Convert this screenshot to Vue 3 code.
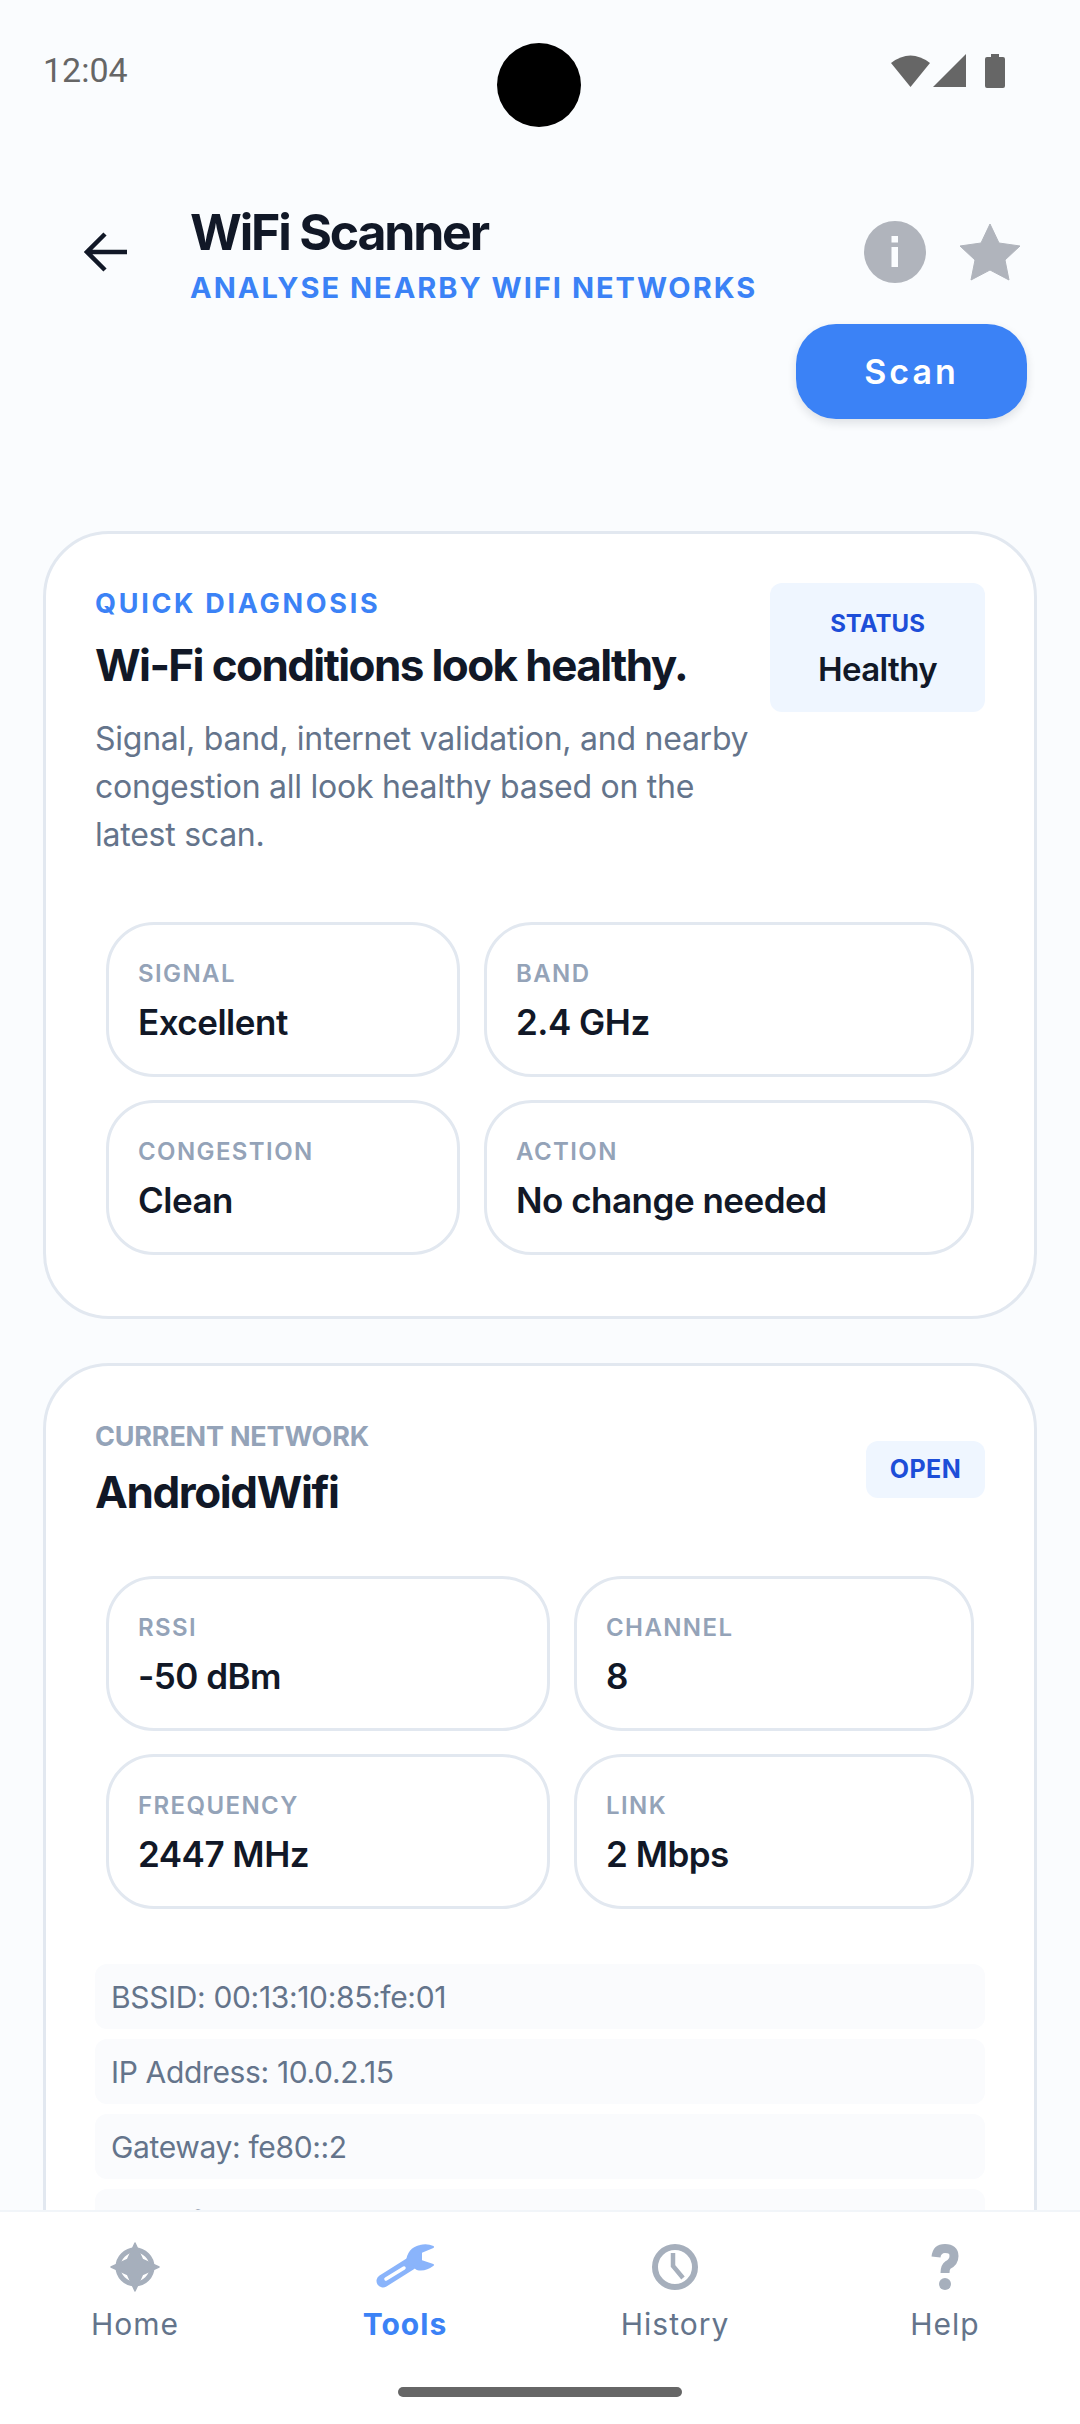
<script setup>
const tilesA = [
  { label: 'Signal', value: 'Excellent' },
  { label: 'Band', value: '2.4 GHz' },
  { label: 'Congestion', value: 'Clean' },
  { label: 'Action', value: 'No change needed' },
]
const tilesB = [
  { label: 'RSSI', value: '-50 dBm' },
  { label: 'Channel', value: '8' },
  { label: 'Frequency', value: '2447 MHz' },
  { label: 'Link', value: '2 Mbps' },
]
const details = [
  'BSSID: 00:13:10:85:fe:01',
  'IP Address: 10.0.2.15',
  'Gateway: fe80::2',
  'DNS: fec0::3 10.0.2.3',
]
</script>

<template>
  <div class="screen">
    <div class="status">
      <span class="time">12:04</span>
      <div class="status-icons">
        <svg width="39" height="33" viewBox="0 0 39 33"><path d="M0 9 Q19.5 -6 39 9 L19.5 33 Z" fill="#666" /></svg>
        <svg width="33" height="33" viewBox="0 0 33 33"><path d="M33 0 V33 H0 Z" fill="#666" /></svg>
        <svg class="batt" width="20" height="34" viewBox="0 0 20 34"><path d="M6 0 H14 V3 H18 Q20 3 20 5 V32 Q20 34 18 34 H2 Q0 34 0 32 V5 Q0 3 2 3 H6 Z" fill="#666" /></svg>
      </div>
      <div class="camera"></div>
    </div>

    <div class="scroll">
      <header class="top">
        <svg class="back" width="44" height="40" viewBox="0 0 44 40">
          <path d="M43 20 H3 M21 2 L3 20 L21 38" fill="none" stroke="#111827" stroke-width="4.5" />
        </svg>
        <div class="titles">
          <h1>WiFi Scanner</h1>
          <p>Analyse nearby WiFi networks</p>
        </div>
        <svg class="info" width="62" height="62" viewBox="0 0 62 62">
          <circle cx="31" cy="31" r="31" fill="#b0b4bc" />
          <rect x="27.5" y="15" width="6.5" height="6.5" fill="#fbfdff" />
          <rect x="27.5" y="26" width="6.5" height="20" fill="#fbfdff" />
        </svg>
        <svg class="star" width="60" height="58" viewBox="0 0 60 58">
          <path d="M30 1 L39 20 L60 23 L45 37 L49 57 L30 47 L11 57 L15 37 L0 23 L21 20 Z" fill="#b0b4bc" stroke="#b0b4bc" stroke-width="1" stroke-linejoin="round" />
        </svg>
      </header>
      <div class="scan-row">
        <button class="scan">Scan</button>
      </div>

      <section class="card first">
        <div class="diag-head">
          <div class="diag-text">
            <div class="eyebrow">Quick diagnosis</div>
            <h2>Wi-Fi conditions look healthy.</h2>
            <p>Signal, band, internet validation, and nearby congestion all look healthy based on the latest scan.</p>
          </div>
          <div class="status-box">
            <span class="status-label">Status</span>
            <span class="status-value">Healthy</span>
          </div>
        </div>
        <div class="tiles tiles-a">
          <div v-for="t in tilesA" :key="t.label" class="tile">
            <span class="tile-label">{{ t.label }}</span>
            <span class="tile-value">{{ t.value }}</span>
          </div>
        </div>
      </section>

      <section class="card">
        <div class="net-head">
          <div class="net-text">
            <div class="net-label">Current network</div>
            <h2 class="net-name">AndroidWifi</h2>
          </div>
          <span class="pill">OPEN</span>
        </div>
        <div class="tiles tiles-b">
          <div v-for="t in tilesB" :key="t.label" class="tile">
            <span class="tile-label">{{ t.label }}</span>
            <span class="tile-value">{{ t.value }}</span>
          </div>
        </div>
        <div class="details">
          <div v-for="d in details" :key="d" class="detail">{{ d }}</div>
        </div>
      </section>
    </div>

    <nav class="nav">
      <div class="nav-item">
        <svg width="50" height="50" viewBox="0 0 50 50" class="nav-icon">
          <circle cx="25" cy="25" r="17" fill="none" stroke="#a6afbc" stroke-width="5" />
          <path d="M25 1 L32.5 17.5 L49 25 L32.5 32.5 L25 49 L17.5 32.5 L1 25 L17.5 17.5 Z" fill="#a6afbc" stroke="#a6afbc" stroke-width="1.5" stroke-linejoin="round" />
        </svg>
        <span>Home</span>
      </div>
      <div class="nav-item active">
        <svg width="60" height="46" viewBox="0 0 60 46" class="nav-icon">
          <path d="M8 37 L35 20" fill="none" stroke="#8ab4fb" stroke-width="13" stroke-linecap="round" />
          <path d="M32 18 Q33 5 45 2 Q52 0 58 3 L46 8 L46 17 L58 21 Q50 27 42 25 Z" fill="#8ab4fb" stroke="#8ab4fb" stroke-width="2" stroke-linejoin="round" />
          <path d="M11 35 L29 24" fill="none" stroke="#fff" stroke-width="3.5" stroke-linecap="round" />
        </svg>
        <span>Tools</span>
      </div>
      <div class="nav-item">
        <svg width="50" height="50" viewBox="0 0 50 50" class="nav-icon">
          <circle cx="25" cy="25" r="20" fill="none" stroke="#a6afbc" stroke-width="6" />
          <path d="M23 11 V24 L33 36" fill="none" stroke="#a6afbc" stroke-width="4.5" />
        </svg>
        <span>History</span>
      </div>
      <div class="nav-item">
        <svg width="50" height="50" viewBox="0 0 50 50" class="nav-icon">
          <path d="M16 15 Q17 6.5 25 6.5 Q34 6.5 34 14 Q34 20 28 23 Q25 25 25 31" fill="none" stroke="#a6afbc" stroke-width="9" />
          <circle cx="25" cy="42" r="6" fill="#a6afbc" />
        </svg>
        <span>Help</span>
      </div>
      <div class="home-bar"></div>
    </nav>
  </div>
</template>

<style scoped>
.screen {
  position: relative;
  width: 1080px;
  height: 2424px;
  overflow: hidden;
  display: flex;
  flex-direction: column;
  background: #fafcfe;
  font-family: Inter, sans-serif;
  color: #111827;
}
.status {
  flex: none;
  height: 140px;
  padding: 0 75px 0 43px;
  display: flex;
  justify-content: space-between;
  align-items: flex-start;
  box-sizing: border-box;
}
.time {
  font-family: Roboto, sans-serif;
  font-size: 34px;
  line-height: 40px;
  margin-top: 50px;
  color: #666;
}
.status-icons {
  display: flex;
  gap: 3px;
  margin-top: 54px;
}
.batt {
  margin-left: 16px;
}
.camera {
  position: absolute;
  left: 497px;
  top: 43px;
  width: 84px;
  height: 84px;
  border-radius: 50%;
  background: #000;
}
.scroll {
  flex: 1;
  min-height: 0;
  overflow: hidden;
}
.top {
  display: flex;
  align-items: center;
  padding: 63px 60px 0 84px;
}
.back,
.info,
.star {
  flex: none;
  margin-bottom: 4px;
}
.titles {
  flex: 1;
  margin-left: 62px;
}
h1 {
  margin: 0;
  font-size: 50px;
  line-height: 58px;
  font-weight: 700;
  letter-spacing: -2.2px;
  color: #111827;
}
.titles p {
  margin: 10px 0 0;
  font-size: 29px;
  line-height: 34px;
  font-weight: 700;
  letter-spacing: 2px;
  text-transform: uppercase;
  white-space: nowrap;
  color: #3b82f6;
}
.info {
  margin-right: 34px;
}
.scan-row {
  display: flex;
  justify-content: flex-end;
  padding: 19px 53px 0 0;
}
.scan {
  width: 231px;
  height: 95px;
  border: none;
  border-radius: 40px;
  background: #3b82f6;
  color: #fff;
  font-family: inherit;
  font-size: 34px;
  font-weight: 600;
  letter-spacing: 3px;
  box-shadow: 0 4px 10px rgba(15, 23, 42, 0.12);
}
.card {
  margin: 44px 43px 0;
  padding: 49px;
  background: #fff;
  border: 3px solid #e2e8f0;
  border-radius: 66px;
}
.first {
  margin-top: 112px;
}
.diag-head {
  display: flex;
  justify-content: space-between;
  align-items: flex-start;
}
.diag-text {
  flex: 1;
  min-width: 0;
  padding-top: 4px;
}
.eyebrow {
  font-size: 27px;
  line-height: 34px;
  font-weight: 700;
  letter-spacing: 2.7px;
  text-transform: uppercase;
  color: #3b82f6;
}
h2 {
  margin: 17px 0 0;
  font-size: 44px;
  line-height: 54px;
  font-weight: 700;
  letter-spacing: -1.6px;
  color: #111827;
}
.diag-text p {
  margin: 23px 0 0;
  width: 670px;
  font-size: 32px;
  line-height: 48px;
  letter-spacing: -0.25px;
  color: #64748b;
}
.status-box {
  flex: none;
  width: 215px;
  height: 129px;
  border-radius: 12px;
  background: #eff6ff;
  display: flex;
  flex-direction: column;
  align-items: center;
  justify-content: center;
  gap: 7px;
  padding-top: 4px;
  box-sizing: border-box;
}
.status-label {
  font-size: 24px;
  line-height: 32px;
  font-weight: 700;
  text-transform: uppercase;
  color: #1d4ed8;
}
.status-value {
  font-size: 33px;
  line-height: 44px;
  font-weight: 600;
  letter-spacing: -0.6px;
  color: #111827;
}
.tiles {
  display: grid;
  gap: 23px 24px;
  margin: 63px 11px 12px;
}
.tiles-a {
  grid-template-columns: 354px 1fr;
}
.tiles-b {
  grid-template-columns: 444px 1fr;
  margin-top: 57px;
}
.tile {
  box-sizing: border-box;
  height: 155px;
  padding: 33px 29px 0;
  border: 3px solid #e2e8f0;
  border-radius: 48px;
  display: flex;
  flex-direction: column;
  gap: 9px;
}
.tile-label {
  font-size: 24px;
  line-height: 32px;
  font-weight: 600;
  letter-spacing: 1.4px;
  text-transform: uppercase;
  color: #94a3b8;
}
.tile-value {
  font-size: 35px;
  line-height: 46px;
  font-weight: 600;
  letter-spacing: -0.5px;
  color: #111827;
}
.net-head {
  display: flex;
  justify-content: space-between;
  align-items: flex-start;
}
.net-text {
  padding-top: 5px;
}
.net-label {
  font-size: 27px;
  line-height: 34px;
  font-weight: 700;
  letter-spacing: -0.2px;
  text-transform: uppercase;
  color: #94a3b8;
}
.net-name {
  margin-top: 11px;
  font-size: 44px;
  letter-spacing: -1.4px;
}
.pill {
  margin-top: 26px;
  box-sizing: border-box;
  width: 119px;
  height: 57px;
  line-height: 57px;
  text-align: center;
  border-radius: 12px;
  background: #eff6ff;
  color: #1d4ed8;
  font-size: 25px;
  font-weight: 700;
  letter-spacing: 0.5px;
}
.details {
  margin-top: 55px;
  display: flex;
  flex-direction: column;
  gap: 10px;
}
.detail {
  height: 65px;
  line-height: 66px;
  padding: 0 16px;
  border-radius: 12px;
  background: #fafbfd;
  font-size: 30px;
  letter-spacing: -0.35px;
  color: #64748b;
}
.nav {
  position: relative;
  flex: none;
  height: 214px;
  box-sizing: border-box;
  background: #fff;
  border-top: 2px solid #f1f5f9;
  display: grid;
  grid-template-columns: repeat(4, 1fr);
}
.nav-item {
  display: flex;
  flex-direction: column;
  align-items: center;
  padding-top: 30px;
  font-size: 30px;
  line-height: 36px;
  letter-spacing: 1px;
  color: #64748b;
}
.nav-icon {
  height: 50px;
  margin-bottom: 14px;
}
.nav-item.active {
  color: #3b82f6;
  font-weight: 700;
}
.home-bar {
  position: absolute;
  left: 398px;
  bottom: 27px;
  width: 284px;
  height: 10px;
  border-radius: 5px;
  background: #666;
}
</style>
